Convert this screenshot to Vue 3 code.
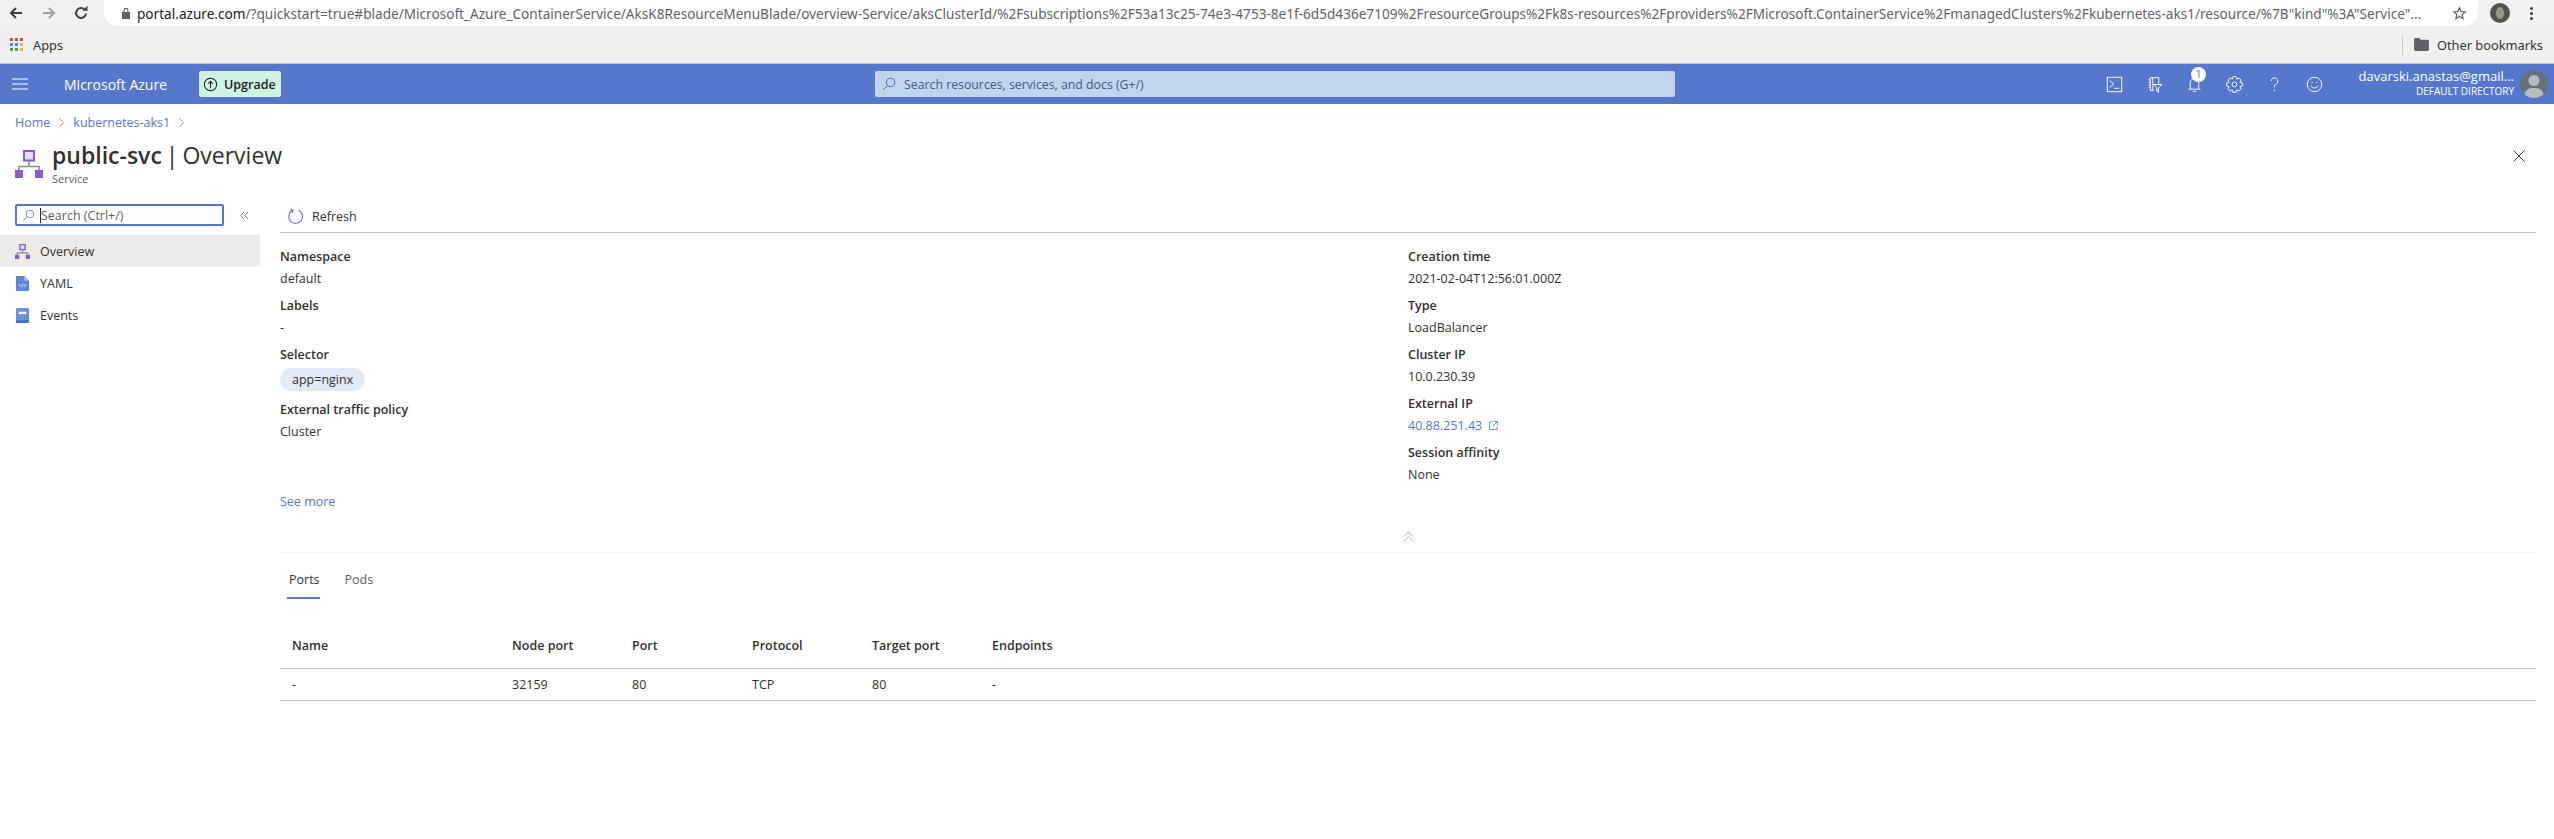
<template>
  <div class="page">
    <!-- browser toolbar -->
    <div class="chrome">
      <svg class="nav-ic back" viewBox="0 0 16 16"><path d="M14 8H3M8 3 3 8l5 5" /></svg>
      <svg class="nav-ic fwd" viewBox="0 0 16 16"><path d="M2 8h11M8 3l5 5-5 5" /></svg>
      <svg class="nav-ic reload" viewBox="0 0 16 16"><path d="M13 8.500A5 5 0 1 1 11.500 4.400" /><path class="solid" d="M9.500 5.800h5v-5z" /></svg>
      <div class="omnibox">
        <svg class="lock" viewBox="0 0 10 12"><path d="M1 5h8v7H1zM2.600 5V3.200a2.400 2.400 0 0 1 4.800 0V5H6.300V3.200a1.300 1.300 0 0 0-2.600 0V5z" /></svg>
        <span class="url"><b>portal.azure.com</b>{{ urlRest }}</span>
        <svg class="star" viewBox="0 0 16 16"><path d="m8 2 1.800 4 4.200.4-3.200 2.800 1 4.300L8 11.200l-3.800 2.300 1-4.300L2 6.400 6.200 6z" /></svg>
      </div>
      <div class="profile"><span></span></div>
      <div class="dots"><i></i><i></i><i></i></div>
    </div>
    <div class="bookmarks">
      <div class="apps-grid">
        <i v-for="c in appColors" :key="c.id" :style="{ background: c.color }"></i>
      </div>
      <span class="apps">Apps</span>
      <div class="bm-right">
        <svg class="folder" viewBox="0 0 16 14"><path d="M0 1.500A1.500 1.500 0 0 1 1.500 0h4L7 2h7.500A1.500 1.500 0 0 1 16 3.500v9a1.500 1.500 0 0 1-1.500 1.500h-13A1.500 1.500 0 0 1 0 12.500z" /></svg>
        <span>Other bookmarks</span>
      </div>
    </div>

    <!-- azure top bar -->
    <header class="topbar">
      <svg class="burger" viewBox="0 0 16 12"><path d="M0 1h16M0 6h16M0 11h16" /></svg>
      <span class="brand">Microsoft Azure</span>
      <div class="upgrade">
        <svg viewBox="0 0 16 16"><circle cx="8" cy="8" r="6.600" /><path d="M8 12V4.800M5.400 7.200 8 4.600l2.600 2.600" /></svg>
        <span>Upgrade</span>
      </div>
      <div class="global-search">
        <svg class="search-ic" viewBox="0 0 16 16"><circle cx="9.800" cy="6.200" r="4.700" /><path d="M6.400 9.600 1.500 14.500" /></svg>
        <span>Search resources, services, and docs (G+/)</span>
      </div>
      <div class="top-icons">
        <svg viewBox="0 0 20 20"><rect x="1.500" y="1.500" width="17" height="17" /><path d="m4.500 5.500 4.500 4-4.500 4M10 14.500h5.500" /></svg>
        <svg viewBox="0 0 20 20"><path d="M9 17H5V2h10v7M3 4.500h2M3 7.500h2M3 10.500h2M3 13.500h2M8 2v15M9 10h9.500l-3.700 4v5l-2-1v-4z" /></svg>
        <div class="bell">
          <svg viewBox="0 0 20 20"><path d="M5 15V8a5 5 0 0 1 10 0v7M3 15.500h14M8 18h4" /></svg>
          <span class="badge">1</span>
        </div>
        <svg viewBox="0 0 20 20"><circle cx="10" cy="10" r="2.800" /><path :d="gearPath" /></svg>
        <svg viewBox="0 0 20 20"><path d="M6 6a4 4 0 1 1 6 3.500c-1.500.8-2 1.800-2 3.500M10 16v2" /></svg>
        <svg viewBox="0 0 20 20"><circle cx="10" cy="10" r="8.500" /><path d="M6 11.500c1 3.400 7 3.400 8 0M7.300 7v1.200M12.700 7v1.200" /></svg>
      </div>
      <div class="account">
        <div class="mail">davarski.anastas@gmail...</div>
        <div class="dir">DEFAULT DIRECTORY</div>
      </div>
      <div class="avatar">
        <svg viewBox="0 0 28 28"><circle cx="14" cy="10.500" r="5.500" /><path d="M4 28c0-8 4-10 10-10s10 2 10 10z" /></svg>
      </div>
    </header>

    <nav class="crumbs">
      <a>Home</a>
      <svg viewBox="0 0 8 12"><path d="m1.500 1 5 5-5 5" /></svg>
      <a>kubernetes-aks1</a>
      <svg viewBox="0 0 8 12"><path d="m1.500 1 5 5-5 5" /></svg>
    </nav>

    <div class="title-row">
      <svg class="svc-ic" viewBox="0 0 28 28">
        <path class="wire" d="M14 11v5M4 20v-3.500h20V20" />
        <rect class="box-top" x="9" y="1" width="10" height="9.500" />
        <rect class="box" x="0" y="20" width="8" height="8" />
        <rect class="box" x="20" y="20" width="8" height="8" />
      </svg>
      <div class="title-text">
        <h1><b>public-svc</b> | Overview</h1>
        <div class="subtitle">Service</div>
      </div>
      <svg class="close" viewBox="0 0 12 12"><path d="m.5.5 11 11M11.500.5l-11 11" /></svg>
    </div>

    <div class="blade">
      <aside class="side">
        <div class="side-search">
          <div class="search-box">
            <svg viewBox="0 0 16 16"><circle cx="9.800" cy="6.200" r="4.700" /><path d="M6.400 9.600 1.500 14.500" /></svg>
            <span class="caret"></span>
            <span>Search (Ctrl+/)</span>
          </div>
          <svg class="collapse" viewBox="0 0 10 10"><path d="M4.500 1 .8 5l3.700 4M9 1 5.300 5 9 9" /></svg>
        </div>
        <div class="menu">
          <div class="menu-item active">
            <svg viewBox="0 0 28 28">
              <path class="wire" d="M14 11v5M4 20v-3.500h20V20" />
              <rect class="box-top" x="9" y="1" width="10" height="9.500" />
              <rect class="box" x="0" y="20" width="8" height="8" />
              <rect class="box" x="20" y="20" width="8" height="8" />
            </svg>
            <span>Overview</span>
          </div>
          <div class="menu-item">
            <svg viewBox="0 0 14 16"><path fill="#5b87d8" d="M1 0h8l5 5v10a1 1 0 0 1-1 1H1a1 1 0 0 1-1-1V1a1 1 0 0 1 1-1z" /><path fill="#a9c4f0" d="M9 0l5 5H9z" /><path fill="none" stroke="#fff" stroke-width=".8" d="M5 8.500 3.500 10 5 11.500M9 8.500l1.500 1.500L9 11.500M7.700 8 6.300 12" /></svg>
            <span>YAML</span>
          </div>
          <div class="menu-item">
            <svg viewBox="0 0 14 16"><rect width="14" height="16" rx="1.500" fill="#6a93dc" /><rect x="0" y="13" width="14" height="3" rx="1" fill="#4470c2" /><rect x="3" y="4" width="8" height="2.500" fill="#fff" /></svg>
            <span>Events</span>
          </div>
        </div>
      </aside>

      <main class="content">
        <div class="toolbar">
          <svg viewBox="0 0 16 16"><path d="M5.300 2.200A6.500 6.500 0 1 0 11 2.200M3 1.500l2.500.6-.4 2.500" /></svg>
          <span>Refresh</span>
        </div>

        <section class="details">
          <div class="col">
            <div class="field"><label>Namespace</label><div class="val">default</div></div>
            <div class="field"><label>Labels</label><div class="val">-</div></div>
            <div class="field chip-field"><label>Selector</label><div class="chip">app=nginx</div></div>
            <div class="field"><label>External traffic policy</label><div class="val">Cluster</div></div>
            <a class="see-more">See more</a>
          </div>
          <div class="col">
            <div v-for="f in rightFields" :key="f.label" class="field">
              <label>{{ f.label }}</label>
              <div v-if="f.link" class="val link">
                {{ f.value }}
                <svg viewBox="0 0 10 10"><path d="M4 1H.5v8.500H9V6M5.500.5h4v4M9.500.5 4.500 5.500" /></svg>
              </div>
              <div v-else class="val">{{ f.value }}</div>
            </div>
          </div>
        </section>

        <div class="fold">
          <svg viewBox="0 0 12 12"><path d="m1 6 5-5 5 5M1 11l5-5 5 5" /></svg>
        </div>

        <div class="tabs">
          <span class="tab current">Ports</span>
          <span class="tab">Pods</span>
        </div>

        <table class="ports">
          <thead>
            <tr>
              <th v-for="c in columns" :key="c">{{ c }}</th>
            </tr>
          </thead>
          <tbody>
            <tr>
              <td v-for="(v, i) in row" :key="i">{{ v }}</td>
            </tr>
          </tbody>
        </table>
      </main>
    </div>
  </div>
</template>

<script setup>
const urlRest = '/?quickstart=true#blade/Microsoft_Azure_ContainerService/AksK8ResourceMenuBlade/overview-Service/aksClusterId/%2Fsubscriptions%2F53a13c25-74e3-4753-8e1f-6d5d436e7109%2FresourceGroups%2Fk8s-resources%2Fproviders%2FMicrosoft.ContainerService%2FmanagedClusters%2Fkubernetes-aks1/resource/%7B"kind"%3A"Service"...'

const palette = ['#d9534a', '#d9534a', '#d9534a', '#4a86e8', '#4a86e8', '#e5b53a', '#4f9d5b', '#4f9d5b', '#e5b53a']
const appColors = palette.map((color, id) => ({ id, color }))

// gear outline: 8 teeth around the centre of a 20x20 box
function buildGear() {
  const pts = []
  for (let i = 0; i < 8; i++) {
    const a = (i * Math.PI) / 4
    for (const [r, d] of [[7, -0.36], [9.4, -0.2], [9.4, 0.2], [7, 0.36]]) {
      pts.push(`${(10 + r * Math.cos(a + d)).toFixed(2)} ${(10 + r * Math.sin(a + d)).toFixed(2)}`)
    }
  }
  return `M${pts.join('L')}z`
}
const gearPath = buildGear()

const rightFields = [
  { label: 'Creation time', value: '2021-02-04T12:56:01.000Z' },
  { label: 'Type', value: 'LoadBalancer' },
  { label: 'Cluster IP', value: '10.0.230.39' },
  { label: 'External IP', value: '40.88.251.43', link: true },
  { label: 'Session affinity', value: 'None' }
]

const columns = ['Name', 'Node port', 'Port', 'Protocol', 'Target port', 'Endpoints']
const row = ['-', '32159', '80', 'TCP', '80', '-']
</script>

<style>
html, body {
  margin: 0;
  background: #fff;
  overflow: hidden;
}
</style>

<style scoped>
.page {
  height: 839px;
  overflow: hidden;
  font-family: "Open Sans", "Noto Sans", sans-serif;
  color: #323130;
  font-size: 12.5px;
}

svg {
  fill: none;
  stroke: currentColor;
  flex-shrink: 0;
}

/* browser */
.chrome {
  height: 26px;
  background: #f1f1f1;
  display: flex;
  align-items: center;
}

.nav-ic {
  width: 16px;
  height: 16px;
  stroke-width: 2;
  color: #3c4043;
}

.back { margin-left: 8px; }
.fwd { margin-left: 17px; color: #a0a0a0; }
.reload { margin-left: 16px; }
.reload .solid { fill: currentColor; stroke: none; }

.omnibox {
  margin-left: 15px;
  width: 2374px;
  height: 26px;
  background: #fff;
  border-radius: 0 0 14px 14px;
  display: flex;
  align-items: center;
  box-sizing: border-box;
  padding-left: 17px;
}

.lock {
  width: 10px;
  height: 12px;
  fill: #5f6368;
  stroke: none;
}

.url {
  margin-left: 6px;
  width: 2294px;
  white-space: nowrap;
  font-family: "Noto Sans", sans-serif;
  font-size: 13.6px;
  color: #5f6368;
}

.url b {
  font-weight: 400;
  color: #202124;
}

.star {
  width: 15px;
  height: 15px;
  margin-left: 21px;
  color: #5f6368;
  stroke-width: 1.400;
}

.profile {
  width: 20px;
  height: 20px;
  border-radius: 50%;
  background: #55524e;
  margin-left: 12px;
  display: flex;
  align-items: center;
  justify-content: center;
}

.profile span {
  width: 8px;
  height: 12px;
  border-radius: 50%;
  background: #9a9791;
}

.dots {
  margin-left: 20px;
  display: flex;
  flex-direction: column;
  gap: 2px;
}

.dots i {
  width: 3px;
  height: 3px;
  border-radius: 50%;
  background: #3c4043;
}

.bookmarks {
  height: 37px;
  background: #f0f0f0;
  border-bottom: 1px solid #c9c9c9;
  display: flex;
  align-items: center;
  font-family: "Noto Sans", sans-serif;
  font-size: 12.8px;
  color: #333;
}

.apps-grid {
  margin-left: 10px;
  width: 13px;
  display: grid;
  grid-template-columns: repeat(3, 3px);
  gap: 2px;
}

.apps-grid i {
  height: 3px;
}

.apps { margin-left: 10px; }

.bm-right {
  margin-left: auto;
  width: 152px;
  box-sizing: border-box;
  height: 20px;
  border-left: 1px solid #c8c8c8;
  display: flex;
  align-items: center;
  padding-left: 11px;
}

.folder {
  width: 15px;
  height: 13px;
  fill: #5f6368;
  stroke: none;
  margin-right: 8px;
}

/* azure bar */
.topbar {
  height: 40px;
  background: #5578cc;
  color: #fff;
  display: flex;
  align-items: center;
  position: relative;
}

.burger {
  width: 16px;
  height: 12px;
  margin-left: 12px;
  stroke-width: 1.500;
  color: #c5d2f0;
}

.brand {
  margin-left: 36px;
  width: 135px;
  font-size: 14px;
}

.upgrade {
  width: 82px;
  height: 26px;
  background: #cff3e2;
  border-radius: 2px;
  color: #1f1f1f;
  display: flex;
  align-items: center;
  font-size: 12.5px;
  font-weight: 600;
}

.upgrade svg {
  width: 15px;
  height: 15px;
  margin: 0 6px 0 4px;
  stroke-width: 1.100;
}

.global-search {
  margin-left: 594px;
  width: 800px;
  height: 26px;
  box-sizing: border-box;
  background: #c0d4ee;
  border-radius: 2px;
  color: #46588f;
  display: flex;
  align-items: center;
  padding-left: 7px;
  font-size: 12.3px;
}

.search-ic {
  width: 14px;
  height: 14px;
  margin-right: 8px;
}

.top-icons {
  margin-left: 431px;
  width: 220px;
  display: flex;
  align-items: center;
  gap: 23px;
}

.top-icons svg {
  width: 17px;
  height: 17px;
  stroke-width: 1.100;
  display: block;
}

.bell { position: relative; }

.badge {
  position: absolute;
  top: -9px;
  left: 5px;
  width: 15px;
  height: 15px;
  border-radius: 50%;
  background: #fff;
  color: #5578cc;
  font-size: 10px;
  line-height: 15px;
  text-align: center;
}

.account {
  position: absolute;
  right: 40px;
  text-align: right;
  line-height: 15px;
}

.mail { font-size: 13px; }
.dir { font-size: 10px; }

.avatar {
  position: absolute;
  right: 6px;
  top: 6px;
  width: 28px;
  height: 28px;
  border-radius: 50%;
  background: #66717f;
  overflow: hidden;
}

.avatar svg {
  width: 28px;
  height: 28px;
  fill: #b9bcbf;
  stroke: none;
  display: block;
}

/* breadcrumb, title */
.crumbs {
  height: 36px;
  padding-left: 15px;
  display: flex;
  align-items: center;
  gap: 8px;
  font-size: 12.5px;
  color: #5578cc;
}

.crumbs svg {
  width: 7px;
  height: 11px;
  color: #8a8886;
  stroke-width: 1;
}

.title-row {
  height: 64px;
  padding: 0 29px 0 15px;
  display: flex;
  align-items: flex-start;
  box-sizing: border-box;
}

.svc-ic {
  width: 28px;
  height: 28px;
  margin-top: 10px;
}

.wire { stroke: #8e8e95; stroke-width: 1.600; }
.box-top { fill: #e6dcf7; stroke: #8a5bd6; stroke-width: 2; }
.box { fill: #8a5bd6; stroke: none; }

.title-text { margin-left: 9px; }

h1 {
  margin: 0;
  font-size: 23px;
  font-weight: 400;
  line-height: 30px;
  word-spacing: -2px;
}

h1 b { font-weight: 600; }

.subtitle {
  font-size: 11px;
  color: #605e5c;
  line-height: 16px;
  margin-top: 1px;
}

.close {
  margin-left: auto;
  margin-top: 10px;
  width: 12px;
  height: 12px;
  stroke-width: 1;
  color: #323130;
}

/* blade */
.blade {
  display: flex;
}

.side {
  width: 260px;
  flex-shrink: 0;
}

.side-search {
  height: 22px;
  padding-left: 15px;
  display: flex;
  align-items: center;
}

.search-box {
  width: 209px;
  height: 22px;
  box-sizing: border-box;
  border: 2px solid #5578cc;
  border-radius: 2px;
  display: flex;
  align-items: center;
  padding-left: 5px;
  color: #605e5c;
}

.search-box svg {
  width: 13px;
  height: 13px;
  color: #5578cc;
  margin-right: 5px;
}

.caret {
  width: 1px;
  height: 15px;
  background: #222;
}

.collapse {
  width: 9px;
  height: 9px;
  margin-left: 16px;
  color: #6d6d6d;
  stroke-width: 1;
}

.menu { margin-top: 9px; }

.menu-item {
  height: 32px;
  display: flex;
  align-items: center;
  padding-left: 15px;
}

.menu-item.active { background: #edebe9; }

.menu-item svg {
  width: 15px;
  height: 15px;
  margin-right: 10px;
  stroke: none;
}

.menu-item .wire { stroke: #8e8e95; stroke-width: 2; }
.menu-item .box-top { stroke: #8a5bd6; stroke-width: 2.500; }

.content {
  flex: 1;
  margin: -4px 18px 0 20px;
  min-width: 0;
}

.toolbar {
  height: 32px;
  border-bottom: 1px solid #c8c6c4;
  display: flex;
  align-items: center;
  padding-left: 7px;
}

.toolbar svg {
  width: 17px;
  height: 17px;
  color: #5578cc;
  margin-right: 8px;
  stroke-width: 1;
}

.details {
  display: grid;
  grid-template-columns: 1fr 1fr;
  height: 295px;
  padding-top: 13px;
  box-sizing: border-box;
}

.field {
  height: 49px;
  line-height: 22px;
}

.field label {
  display: block;
  font-weight: 600;
}

.val.link { color: #5578cc; }

.val.link svg {
  width: 9px;
  height: 9px;
  margin-left: 4px;
  stroke-width: .9;
}

.chip-field { height: 55px; }

.chip {
  display: inline-block;
  height: 23px;
  line-height: 23px;
  padding: 0 12px;
  margin-top: 2px;
  border-radius: 12px;
  background: #e1ebf7;
}

.see-more {
  display: block;
  margin-top: 43px;
  line-height: 22px;
  color: #5578cc;
}

.fold {
  height: 16px;
  display: flex;
  justify-content: center;
  align-items: center;
  border-bottom: 1px solid #f2f2f2;
  padding-bottom: 8px;
}

.fold svg {
  width: 11px;
  height: 11px;
  color: #8fa8e2;
  stroke-width: 1;
}

.tabs {
  margin-top: 16px;
  display: flex;
  gap: 25px;
  padding-left: 9px;
  height: 28px;
}

.tab {
  line-height: 22px;
  color: #605e5c;
  position: relative;
}

.tab.current { color: #323130; }

.tab.current::after {
  content: "";
  position: absolute;
  left: -2px;
  right: 0;
  bottom: -2px;
  height: 2px;
  background: #5578cc;
}

.ports {
  width: 100%;
  margin-top: 27px;
  border-collapse: collapse;
  table-layout: fixed;
}

.ports th,
.ports td {
  box-sizing: border-box;
  padding: 0 0 0 12px;
  text-align: left;
  width: 120px;
  font-size: 12.5px;
}

.ports th:first-child,
.ports td:first-child { width: 220px; }

.ports th:last-child,
.ports td:last-child { width: auto; }

.ports th {
  font-weight: 600;
  height: 44px;
  border-bottom: 1px solid #c8c6c4;
}

.ports td {
  height: 32px;
  border-bottom: 1px solid #c8c6c4;
}
</style>
